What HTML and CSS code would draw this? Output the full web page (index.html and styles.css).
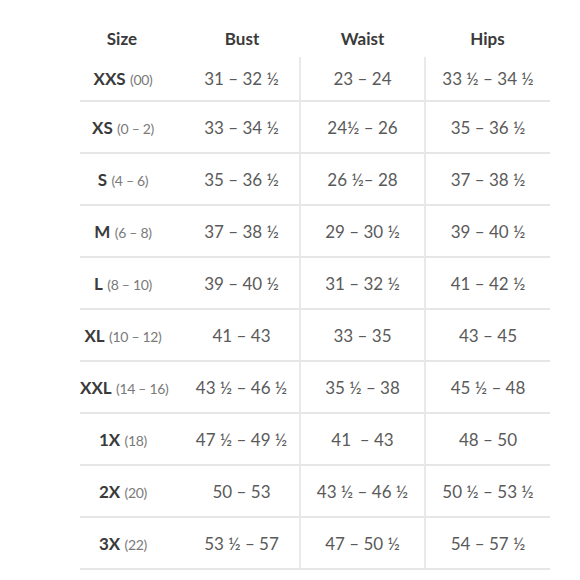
FILE: index.html
```html
<!DOCTYPE html>
<html lang="en">
<head>
<meta charset="utf-8">
<title>Size Chart</title>
<link rel="stylesheet" href="styles.css">
</head>
<body>
<table class="chart">
  <colgroup>
    <col class="c-size"><col class="c-bust"><col class="c-waist"><col class="c-hips">
  </colgroup>
  <thead>
    <tr>
      <th class="size-h">Size</th>
      <th>Bust</th>
      <th>Waist</th>
      <th>Hips</th>
    </tr>
  </thead>
  <tbody>
    <tr class="first">
      <td class="size"><b>XXS</b> <span class="num">(00)</span></td>
      <td>31 – 32 ½</td><td class="sep">23 – 24</td><td class="sep">33 ½ – 34 ½</td>
    </tr>
    <tr>
      <td class="size"><b>XS</b> <span class="num">(0 – 2)</span></td>
      <td>33 – 34 ½</td><td class="sep">24½ – 26</td><td class="sep">35 – 36 ½</td>
    </tr>
    <tr>
      <td class="size"><b>S</b> <span class="num">(4 – 6)</span></td>
      <td>35 – 36 ½</td><td class="sep">26 ½– 28</td><td class="sep">37 – 38 ½</td>
    </tr>
    <tr>
      <td class="size"><b>M</b> <span class="num">(6 – 8)</span></td>
      <td>37 – 38 ½</td><td class="sep">29 – 30 ½</td><td class="sep">39 – 40 ½</td>
    </tr>
    <tr>
      <td class="size"><b>L</b> <span class="num">(8 – 10)</span></td>
      <td>39 – 40 ½</td><td class="sep">31 – 32 ½</td><td class="sep">41 – 42 ½</td>
    </tr>
    <tr>
      <td class="size"><b>XL</b> <span class="num">(10 – 12)</span></td>
      <td>41 – 43</td><td class="sep">33 – 35</td><td class="sep">43 – 45</td>
    </tr>
    <tr>
      <td class="size"><b>XXL</b> <span class="num">(14 – 16)</span></td>
      <td>43 ½ – 46 ½</td><td class="sep">35 ½ – 38</td><td class="sep">45 ½ – 48</td>
    </tr>
    <tr>
      <td class="size"><b>1X</b> <span class="num">(18)</span></td>
      <td>47 ½ – 49 ½</td><td class="sep">41 &nbsp;– 43</td><td class="sep">48 – 50</td>
    </tr>
    <tr>
      <td class="size"><b>2X</b> <span class="num">(20)</span></td>
      <td>50 – 53</td><td class="sep">43 ½ – 46 ½</td><td class="sep">50 ½ – 53 ½</td>
    </tr>
    <tr>
      <td class="size"><b>3X</b> <span class="num">(22)</span></td>
      <td>53 ½ – 57</td><td class="sep">47 – 50 ½</td><td class="sep">54 – 57 ½</td>
    </tr>
  </tbody>
</table>
</body>
</html>
```

FILE: styles.css
```css
html, body {
  margin: 0;
  padding: 0;
  background: #ffffff;
}

body {
  font-family: "Lato", "Liberation Sans", sans-serif;
  color: #555555;
}

.chart {
  border-collapse: collapse;
  table-layout: fixed;
  width: 470px;
  margin: 20px 0 0 80px;
}

.c-size { width: 104px; }
.c-bust { width: 116px; }
.c-waist { width: 125px; }
.c-hips { width: 125px; }

.chart th {
  height: 37px;
  padding: 0;
  font-size: 17px;
  font-weight: 700;
  color: #3a3a3a;
  text-align: center;
  vertical-align: middle;
}

.chart th.size-h {
  padding-right: 20px;
}

.chart td {
  height: 50px;
  padding: 0;
  font-size: 17px;
  font-weight: 400;
  color: #5a5a5a;
  text-align: center;
  vertical-align: middle;
  border-bottom: 2px solid #e6e6e6;
  white-space: nowrap;
}

.chart tr.first td {
  height: 43px;
}

.chart td.sep {
  border-left: 2px solid #e9e9e9;
}

.chart td.size {
  padding-right: 18px;
}

.size b {
  font-weight: 700;
  font-size: 17px;
  color: #3a3a3a;
}

.size .num {
  font-size: 14px;
  letter-spacing: -0.3px;
  color: #7a7a7a;
}
```
